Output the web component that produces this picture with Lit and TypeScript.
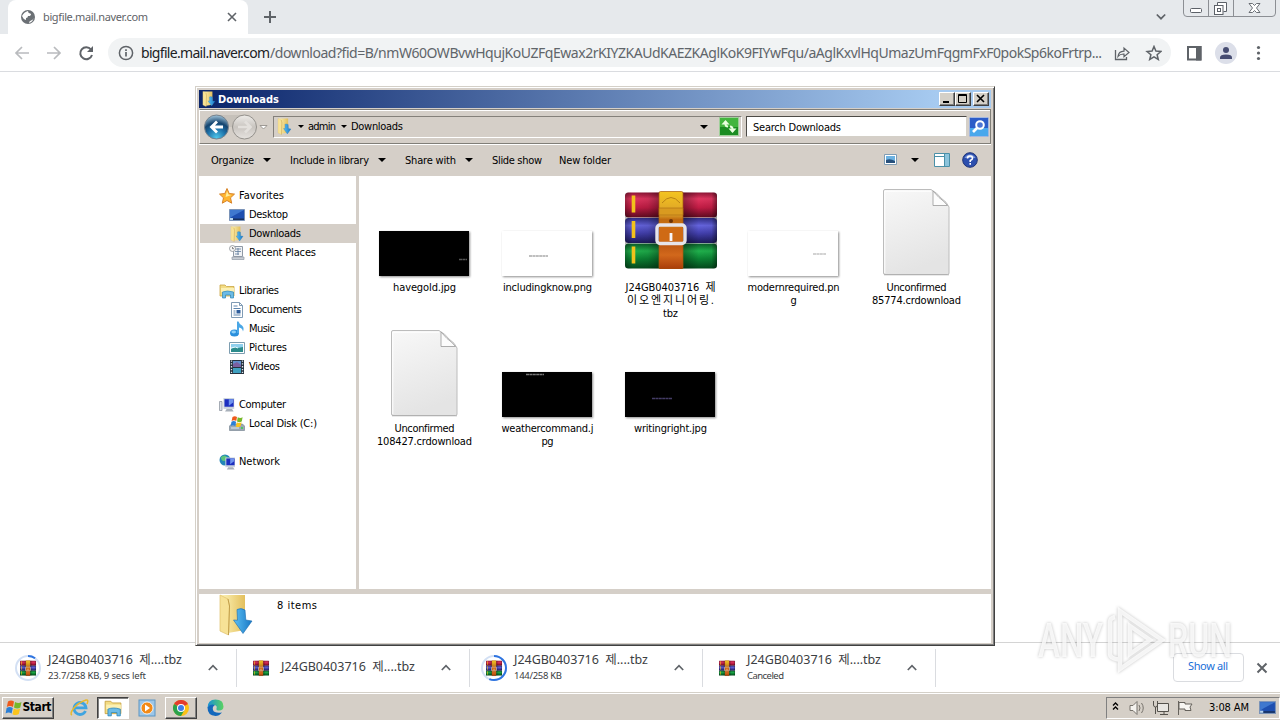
import { LitElement, html, css, svg, nothing } from 'lit';
import type { TemplateResult } from 'lit';
import { customElement, property } from 'lit/decorators.js';
import { classMap } from 'lit/directives/class-map.js';

interface NavItem {
  text: string;
  width: number;
  icon: string;
  child?: boolean;
  selected?: boolean;
  gap?: boolean;
}

interface FileItem {
  icon: string;
  lines: [string, number][];
}

interface Download {
  name: string;
  status?: string;
  statusWidth?: number;
  progress?: number;
}

// Text tracked so that it fills the given width exactly.
@customElement('fit-label')
export class FitLabel extends LitElement {
  @property() text = '';
  @property({ type: Number }) width = 0;

  static styles = css`
    :host {
      display: inline-block;
      flex: none;
      white-space: pre;
      text-align: left;
    }
  `;

  updated() {
    this.style.width = `${this.width}px`;
    this.fit();
    document.fonts.ready.then(() => this.fit());
  }

  fit() {
    const span = this.shadowRoot!.querySelector('span')!;
    span.style.letterSpacing = '0px';
    const natural = span.getBoundingClientRect().width;
    const gaps = this.text.length - 1;
    if (gaps > 0) {
      span.style.letterSpacing = `${(this.width - natural) / gaps}px`;
    }
  }

  render() {
    return html`<span>${this.text}</span>`;
  }
}

const label = (text: string, width: number, cls = '') =>
  html`<fit-label class=${cls} .text=${text} .width=${width}></fit-label>`;

const icon = (w: number, h: number, box: string, body: TemplateResult | unknown) =>
  html`<svg width=${w} height=${h} viewBox=${box} fill="none">${body}</svg>`;

const folderShape = svg`
  <defs>
    <linearGradient id="fold" x1="0" x2="1"><stop offset="0" stop-color="#fdf3b8"/><stop offset="1" stop-color="#e3bf5c"/></linearGradient>
    <linearGradient id="arr" x1="0" x2="1"><stop offset="0" stop-color="#5cc0f5"/><stop offset="1" stop-color="#1877c4"/></linearGradient>
  </defs>
  <path d="M3 1h24v35l-17 3L3 36z" fill="url(#fold)"/>
  <path d="M2 1l8 4 1.500 7-1 29L2 37z" fill="#f7e296" stroke="#e0c06a" stroke-width=".7"/>
  <path d="M10 5l1.500 7-1 29" stroke="#b8923c" stroke-width=".8"/>
  <path d="M19 15.500q4-2 8 .5l.8 10 6.200 1-9 12.500L15.500 26l4 .2z" fill="url(#arr)" stroke="#1769ae" stroke-width=".6"/>`;

const rarShape = svg`
  <defs>
    <linearGradient id="rr" x2="0" y2="1"><stop offset="0" stop-color="#8e1535"/><stop offset=".25" stop-color="#e0355f"/><stop offset=".6" stop-color="#c01c44"/><stop offset="1" stop-color="#5e0a20"/></linearGradient>
    <linearGradient id="rb" x2="0" y2="1"><stop offset="0" stop-color="#2e2c82"/><stop offset=".3" stop-color="#6463dc"/><stop offset=".6" stop-color="#4340ae"/><stop offset="1" stop-color="#1c1958"/></linearGradient>
    <linearGradient id="rg" x2="0" y2="1"><stop offset="0" stop-color="#0a5a28"/><stop offset=".3" stop-color="#20b04c"/><stop offset=".6" stop-color="#0c8434"/><stop offset="1" stop-color="#04491c"/></linearGradient>
    <linearGradient id="bt" x2="0" y2="1"><stop offset="0" stop-color="#f4c420"/><stop offset=".3" stop-color="#dba028"/><stop offset=".36" stop-color="#c06a10"/><stop offset=".62" stop-color="#e07c18"/><stop offset=".66" stop-color="#b85410"/><stop offset=".82" stop-color="#d2681c"/><stop offset="1" stop-color="#a83c08"/></linearGradient>
    <linearGradient id="sh"><stop offset="0" stop-color="#000" stop-opacity=".3"/><stop offset=".08" stop-color="#000" stop-opacity="0"/><stop offset=".25" stop-color="#000" stop-opacity=".08"/><stop offset=".36" stop-color="#000" stop-opacity=".3"/><stop offset=".65" stop-color="#000" stop-opacity=".3"/><stop offset=".8" stop-color="#000" stop-opacity="0"/><stop offset=".94" stop-color="#000" stop-opacity=".05"/><stop offset="1" stop-color="#000" stop-opacity=".45"/></linearGradient>
  </defs>
  <rect x="0" y="1.500" width="92" height="25" rx="3.500" fill="url(#rr)"/>
  <rect x="0" y="27" width="92" height="25" rx="3.500" fill="url(#rb)"/>
  <rect x="0" y="52.500" width="92" height="25" rx="3.500" fill="url(#rg)"/>
  <rect x="0" y="1.500" width="92" height="76" rx="3" fill="url(#sh)"/>
  <path d="M8.500 4.500v17M8.500 30v17M8.500 55.500v17" stroke="#f2c21c" stroke-width="3.600"/>
  <rect x="34" y=".5" width="24" height="77.500" rx="1.500" fill="url(#bt)" stroke="#a45a0c" stroke-width=".7"/>
  <path d="M34 17h24v7H34z" fill="#d99a20" stroke="#a86a10" stroke-width=".6"/>
  <path d="M37 12q9-11 18 0" stroke="#b98215"/>
  <circle cx="46" cy="30" r="2" fill="#6b3208"/>
  <rect x="32" y="34" width="28" height="18.500" rx="3" stroke="#e6e4ea" stroke-width="3.400"/>
  <path d="M34 37h24v13H34z" fill="#cf6a14"/>
  <path d="M46 42v8" stroke="#f7f5f8" stroke-width="2.800"/>`;

const docShape = svg`
  <defs><linearGradient id="pg" x2=".3" y2="1"><stop offset="0" stop-color="#f8f8f8"/><stop offset="1" stop-color="#e4e4e4"/></linearGradient></defs>
  <path d="M.5 2q0-1.500 1.500-1.500h46q6 3 10 8.500 6 4 8 9v66q0 1.500-1.500 1.500H2Q.5 85.500.5 84z" fill="url(#pg)" stroke="#bcbcbc"/>
  <path d="M2 2.200h46M1.800 2v82" stroke="#fff"/>
  <path d="M1 85.800h65" stroke="#a9a9a9" stroke-width=".8"/>
  <path d="M50 2v14.500h14.500Q61 12 56 8.500z" fill="#fcfcfc" stroke="#999" stroke-width=".8"/>`;

const monitor = svg`
  <path d="M5 1h10v10H5z" fill="#c9d2dc"/><path d="M6 2h8.500v7H6z" fill="#1c2fc0"/>
  <path d="M10 2h4v3l-4 3z" fill="#6f94ee"/><path d="M8 11h5l1.500 2.500h-8z" fill="#a8b0ba"/>`;

const libShape = svg`
  <path d="M1 2h5l1.500 1.500H15V13H1z" fill="#f3dc84" stroke="#c9a443" stroke-width=".8"/>
  <path d="M2 5h13v4H2z" fill="#fbf0b4"/>
  <path d="M3.500 15V9q4.500-2 11 0v6h-3v-3H6.500v3z" fill="#6cbbe6" stroke="#2b86ba" stroke-width=".7"/>`;

const winFlag = svg`
  <path d="M2 2.500q3-2 6 0L7 8Q4 6 .8 8z" fill="#ee5a1c"/><path d="M9 3q3.500 2 6.500 0L14.300 8.500q-3 2-6.300 0z" fill="#76b82a"/>
  <path d="M.6 9q3-2 6.200 0L5.600 14.500q-3-2-6 0z" fill="#2b7fd6"/><path d="M7.800 9.500q3 2 6.300 0L12.800 15q-3 2-6.300.2z" fill="#fbc41c"/>`;

const desktopShape = svg`
  <path d="M.5 2.500h15v11H.5z" fill="#1e4fb0" stroke="#7a93b8"/><path d="M1 3h14L4 9 1 11z" fill="#3f78cf"/>
  <path d="M1 11.500h14V13H1z" fill="#17305e"/><path d="M1 11h3v2H1z" fill="#b7d6ef"/>`;

const small: Record<string, unknown> = {
  star: svg`<path d="M8 .5l2.200 5 5.300.6-4 3.700 1.200 5.400L8 12.500l-4.700 2.700 1.200-5.400-4-3.700 5.300-.6z" fill="#ffb52e" stroke="#d7832a"/><path d="M8 3l1.500 3.500 3 .5-6 2z" fill="#ffee9c"/>`,
  desktop: desktopShape,
  recent: svg`<path d="M4.500 1.500h9v10h-9z" fill="#f0f2f5" stroke="#8f99a5"/><path d="M6 4h6M6 6.500h6M6 9h4M9 3v7" stroke="#5f7c9d" stroke-width=".8"/><path d="M3 12h12v2.500H3z" fill="#c8cdd4" stroke="#8f99a5" stroke-width=".7"/><circle cx="3.500" cy="3.500" r="3" fill="#f6f6f6" stroke="#8a8f96" stroke-width=".8"/><path d="M3.500 2v1.700h1.500" stroke="#555" stroke-width=".7"/>`,
  libraries: libShape,
  documents: svg`<path d="M2.500.5h8l3 3v12h-11z" fill="#fff" stroke="#7f9bb5"/><path d="M10.500.5v3h3" stroke="#7f9bb5"/><path d="M4.500 4h4M4.500 6.500h7M4.500 13h7M4.500 9h2M4.500 11h2" stroke="#5d84ad"/><path d="M7.500 8h4v3.500h-4z" fill="#2d5c9b"/>`,
  music: svg`<ellipse cx="5.500" cy="12" rx="4.500" ry="3.500" fill="#2a8fdc"/><ellipse cx="4.700" cy="11" rx="2.300" ry="1.400" fill="#8dd0f8"/><path d="M8 12V.5h1.500q1 3 3.500 4 2.500 2 1 6-.5-3.500-4-4V12z" fill="#4aa7e6"/>`,
  pictures: svg`<path d="M.5 2.500h15v11H.5z" fill="#fff" stroke="#7d9db0"/><path d="M2 4h12v8H2z" fill="#8fd0ee"/><path d="M2 9q4-3 7-1l5-1v5H2z" fill="#2c8c8c"/><path d="M2 8q5-2 7 0" stroke="#e9fbff"/>`,
  videos: svg`<path d="M1 1h14v14H1z" fill="#26323f"/><path d="M4 2h8v6H4z" fill="#5f8fce"/><path d="M4 9h8v5H4z" fill="#3fa0c0"/><path d="M4 5l4-2 4 3v2H4z" fill="#7b5fa0"/><path d="M2.500 1.500v13M13.500 1.500v13" stroke="#dfe6ec" stroke-width="1.300" stroke-dasharray="1.300 1.500"/>`,
  computer: svg`<g transform="translate(-1 0) scale(1.08)">${monitor}</g><path d="M.5 4.500h2.500v9H.5z" fill="#dde2e8" stroke="#848d98" stroke-width=".7"/>`,
  disk: svg`<path d="M.5 10l2-2h11l2 2v4.500H.5z" fill="#9aa7b4" stroke="#6f7c89" stroke-width=".6"/><path d="M2 12h8" stroke="#dfe8ef"/><path d="M12 12h2" stroke="#35d04a" stroke-width="1.500"/><g transform="translate(2 -1) scale(.75)">${winFlag}</g>`,
  network: svg`<circle cx="6" cy="6" r="5.500" fill="#2386b8"/><path d="M2 3q4-3 6 0t-3 4q-3 0-3-4M8 8l3-3v4z" fill="#5cc47c"/><g transform="translate(1.500 2.500) scale(.97)">${monitor}</g>`,
};

const GLOBE = svg`<circle cx="8" cy="8" r="7" fill="#6b7075"/><path d="M2 7q2-4 6-5 0 2 2 2.500t0 2.500H8q0 2-2 2v2Q3 10 2 7M9 14q0-2 2-2.500t2.500-2.500Q13 13 9 14" fill="#fff"/>`;

const CHROME = svg`<circle cx="8" cy="8" r="8" fill="#fbc116"/><path d="M8 8L1.070 4A8 8 0 0 1 14.930 4z" fill="#e33b2e"/><path d="M8 8L1.070 4A8 8 0 0 0 8 16l3.500-6z" fill="#2ba24c"/><circle cx="8" cy="8" r="4" fill="#fff"/><circle cx="8" cy="8" r="3" fill="#3f7de8"/>`;

const navItems: NavItem[] = [
  { text: 'Favorites', width: 45, icon: 'star' },
  { text: 'Desktop', width: 39, icon: 'desktop', child: true },
  { text: 'Downloads', width: 52, icon: 'downloads', child: true, selected: true },
  { text: 'Recent Places', width: 67, icon: 'recent', child: true },
  { text: 'Libraries', width: 40, icon: 'libraries', gap: true },
  { text: 'Documents', width: 53, icon: 'documents', child: true },
  { text: 'Music', width: 26, icon: 'music', child: true },
  { text: 'Pictures', width: 38, icon: 'pictures', child: true },
  { text: 'Videos', width: 31, icon: 'videos', child: true },
  { text: 'Computer', width: 47, icon: 'computer', gap: true },
  { text: 'Local Disk (C:)', width: 68, icon: 'disk', child: true },
  { text: 'Network', width: 41, icon: 'network', gap: true },
];

const files: FileItem[] = [
  { icon: 'havegold', lines: [['havegold.jpg', 63]] },
  { icon: 'including', lines: [['includingknow.png', 89]] },
  { icon: 'rar', lines: [['J24GB0403716  제', 90], ['이오엔지니어링.', 87], ['tbz', 15]] },
  { icon: 'modern', lines: [['modernrequired.pn', 92], ['g', 6]] },
  { icon: 'doc', lines: [['Unconfirmed', 60], ['85774.crdownload', 89]] },
  { icon: 'doc', lines: [['Unconfirmed', 60], ['108427.crdownload', 95]] },
  { icon: 'weather', lines: [['weathercommand.j', 92], ['pg', 12]] },
  { icon: 'writing', lines: [['writingright.jpg', 73]] },
];

const downloads: Download[] = [
  { name: 'J24GB0403716  제....tbz', status: '23.7/258 KB, 9 secs left', statusWidth: 98, progress: 0.1 },
  { name: 'J24GB0403716  제....tbz' },
  { name: 'J24GB0403716  제....tbz', status: '144/258 KB', statusWidth: 48, progress: 0.56 },
  { name: 'J24GB0403716  제....tbz', status: 'Canceled', statusWidth: 37 },
];

const caret = html`<i class="caret"></i>`;
const miniFolder = (w = 16) => icon(w, w, '1 0 34 42', folderShape);

@customElement('explorer-window')
export class ExplorerWindow extends LitElement {
  static styles = css`
    :host {
      display: flex;
      flex-direction: column;
      box-sizing: border-box;
      width: 800px;
      height: 560px;
      padding: 2px 1px 1px 2px;
      background: #d5cfc8;
      border: 1px solid #d4d0c8;
      border-right-color: #404040;
      border-bottom-color: #404040;
      box-shadow: inset 1px 1px #fff, inset -1px -1px #808080;
      font: 11px/13px 'DejaVu Sans Condensed', 'Noto Sans CJK KR', sans-serif;
      color: #000;
    }
    svg { display: block; flex: none; }
    .title {
      display: flex;
      align-items: center;
      height: 18px;
      margin: 1px 2px 0 1px;
      padding: 0 2px 0 2px;
      background: linear-gradient(90deg, #0a246a, #a6caf0 93%);
      color: #fff;
      font-weight: bold;
    }
    .title fit-label { margin-left: 1px; }
    .grow { flex: 1; }
    .btn {
      box-sizing: border-box;
      width: 16px;
      height: 14px;
      border: 1px solid;
      border-color: #fff #404040 #404040 #fff;
      background: #d4d0c8;
      box-shadow: inset -1px -1px #808080;
    }
    .btn.close { margin-left: 2px; }
    .rebar {
      display: flex;
      align-items: center;
      box-sizing: border-box;
      height: 35px;
      margin: 1px 2px 0 1px;
      padding: 0 1px 0 4px;
      border: 1px solid #807e78;
      border-left-color: #fff;
      box-shadow: inset 0 1px #fff, 0 1px #fff;
    }
    .caret {
      width: 0;
      border: 4px solid transparent;
      border-top-color: #000;
      border-bottom: 0;
    }
    .caret.s { border-width: 3px 3px 0; }
    .address {
      display: flex;
      align-items: center;
      box-sizing: border-box;
      width: 469px;
      height: 22px;
      margin-left: 5px;
      padding: 0 2px;
      border: 1px solid #84807a;
      border-bottom-color: #fff;
      border-right-color: #fff;
    }
    .address .s { margin: 0 4px 0 5px; }
    .address .caret:not(.s) { margin-right: 11px; }
    .search {
      box-sizing: border-box;
      width: 221px;
      height: 21px;
      margin: 0 2px 0 4px;
      padding: 4px 6px 2px;
      background: #fff;
      border: 1px solid #d4d0c8;
      border-color: #4c4a46 #d4d0c8 #d4d0c8 #4c4a46;
    }
    .commands {
      display: flex;
      align-items: center;
      height: 32px;
      padding: 0 14px 0 13px;
    }
    .commands .caret { margin: 0 19px 0 9px; }
    .commands .next { margin-left: 17px; }
    .body { display: flex; flex: none; height: 413px; margin: 0 2px 0 1px; }
    .nav {
      box-sizing: border-box;
      width: 157px;
      padding: 10px 0 0 1px;
      background: #fff;
    }
    .item {
      display: flex;
      align-items: center;
      gap: 4px;
      height: 19px;
      padding-left: 19px;
    }
    .item.child { padding-left: 29px; }
    .item.gap { margin-top: 19px; }
    .item.selected { background: #d5cfc8; }
    .files {
      display: grid;
      grid-template-columns: repeat(5, 123px);
      grid-auto-rows: 141px;
      width: 632px;
      box-sizing: border-box;
      margin-left: 3px;
      padding-left: 4px;
      background: #fff;
    }
    .file {
      display: flex;
      flex-direction: column;
      align-items: center;
    }
    .pic {
      display: flex;
      flex: none;
      align-items: flex-end;
      justify-content: center;
      height: 100px;
      margin: 0 1px 5px 0;
    }
    .pic.rar { height: 93px; margin: 0 0 12px; }
    .pic.doc { margin-right: 0; }
    .thumb { filter: drop-shadow(1px 1px 1px rgba(0, 0, 0, 0.45)); }
    .details {
      display: flex;
      flex: none;
      height: 49px;
      margin: 5px 2px 0 1px;
      padding-left: 18px;
      background: #fff;
    }
    .details fit-label { margin: 5px 0 0 22px; }
  `;

  renderPic(kind: string) {
    if (kind === 'rar') return icon(92, 78, '0 0 92 78', rarShape);
    if (kind === 'doc') return icon(67, 87, '0 0 67 87', docShape);
    const white = kind === 'including' || kind === 'modern';
    // faint caption strokes inside each preview: x, y, length, colour
    const marks: Record<string, [number, number, number, string]> = {
      havegold: [80, 28.5, 8, '#555'],
      including: [27, 25, 19, '#aaa'],
      modern: [65, 23, 13, '#c4c4c4'],
      weather: [24, 2.5, 18, '#777'],
      writing: [27, 26.5, 20, '#443c66'],
    };
    const [x, y, len, color] = marks[kind];
    return html`<svg class="thumb" width="90" height="45" viewBox="0 0 90 45">
      <rect width="90" height="45" fill=${white ? '#fff' : '#000'}></rect>
      <path d="M${x} ${y}h${len}" stroke=${color} stroke-width="1.3" stroke-dasharray="3 .4"></path>
    </svg>`;
  }

  renderNav(item: NavItem) {
    const classes = { item: true, child: !!item.child, selected: !!item.selected, gap: !!item.gap };
    return html`<div class=${classMap(classes)}>
      ${item.icon === 'downloads' ? miniFolder() : icon(16, 16, '0 0 16 16', small[item.icon])}
      ${label(item.text, item.width)}
    </div>`;
  }

  render() {
    return html`
      <div class="title">
        ${miniFolder()}${label('Downloads', 61)}
        <span class="grow"></span>
        <span class="btn">${icon(14, 12, '0 0 14 12', svg`<path d="M3 9h6" stroke="#000" stroke-width="2"/>`)}</span>
        <span class="btn">${icon(14, 12, '0 0 14 12', svg`<path d="M2.500 1.500h8v8h-8zM2 2.500h9" stroke="#000"/>`)}</span>
        <span class="btn close">${icon(14, 12, '0 0 14 12', svg`<path d="M3 2l7 7M10 2l-7 7" stroke="#000" stroke-width="1.600"/>`)}</span>
      </div>
      <div class="rebar">
        ${icon(64, 28, '0 0 64 28', svg`
          <defs>
            <radialGradient id="bk" cx=".5" cy=".95" r=".9"><stop offset="0" stop-color="#4fc8ec"/><stop offset=".45" stop-color="#1c6ea6"/><stop offset=".7" stop-color="#16456f"/><stop offset="1" stop-color="#8fb4cc"/></radialGradient>
            <linearGradient id="fw" x2="0" y2="1"><stop offset="0" stop-color="#eeece9"/><stop offset=".5" stop-color="#c9c5c0"/><stop offset="1" stop-color="#e6e3df"/></linearGradient>
          </defs>
          <path d="M13 2h29v12H13z" fill="#c6c1ba"/>
          <circle cx="12.500" cy="14" r="12" fill="url(#bk)" stroke="#77828c"/>
          <path d="M19 14H8M13 8.500L7.500 14l5.500 5.500" stroke="#fff" stroke-width="2.800"/>
          <circle cx="40.500" cy="14" r="12" fill="url(#fw)" stroke="#94918c"/>
          <path d="M34 14h12M41 8.500l5.500 5.500-5.500 5.500" stroke="#e3e0dc" stroke-width="2.600"/>
          <path d="M56 12.500h7L59.500 16z" fill="#fff" stroke="#8a8680" stroke-width=".8"/>`)}
        <div class="address">
          ${miniFolder(17)}<i class="caret s"></i>
          ${label('admin', 28)}<i class="caret s"></i>${label('Downloads', 52)}
          <span class="grow"></span>${caret}
          ${icon(20, 19, '0 0 20 19', svg`
            <rect x=".5" y=".5" width="19" height="18" fill="#43b53e" stroke="#9fcf9a"/><path d="M1 10h18v8H1z" fill="#1c8c22"/>
            <path d="M6.500 4.500v2.500q0 2.500 2.500 2.500" stroke="#eaffdf" stroke-width="2"/><path d="M2.500 7.500l4-4.500 4 4.500z" fill="#eaffdf"/>
            <path d="M13.500 14.500V12q0-2.500-2.500-2.500" stroke="#eaffdf" stroke-width="2"/><path d="M9.500 11.500l4 4.500 4-4.500z" fill="#eaffdf"/>`)}
        </div>
        <div class="search">${label('Search Downloads', 88)}</div>
        ${icon(20, 20, '0 0 20 20', svg`
          <rect x=".5" y=".5" width="19" height="19" rx="1" fill="#2c5cc8" stroke="#a3b8e0"/><path d="M1 11h18v8H1z" fill="#4aa8ec"/>
          <circle cx="11" cy="8" r="3.800" fill="#4b74d4" stroke="#fff" stroke-width="2"/><path d="M8 11l-4 4" stroke="#fff" stroke-width="2.600"/>`)}
      </div>
      <div class="commands">
        ${label('Organize', 43)}${caret}${label('Include in library', 79)}${caret}${label('Share with', 51)}${caret}
        ${label('Slide show', 50)}${label('New folder', 52, 'next')}
        <span class="grow"></span>
        ${icon(96, 18, '0 0 96 18', svg`
          <path d="M1.500 3.500h12v10h-12z" fill="#fff" stroke="#7e9db5"/><path d="M3 5h9v7H3z" fill="#6cb2e2"/><path d="M3 9q4-2 9 1v2H3z" fill="#27507c"/>
          <path d="M28 7h8l-4 4z" fill="#000"/>
          <path d="M51.500 2.500h15v13h-15z" fill="#fff" stroke="#4a90a8"/><path d="M61.500 3v12.500M52 5.500h9" stroke="#4a90a8"/><path d="M62 3h4v12h-4z" fill="#8cc4dc"/>
          <circle cx="87" cy="9" r="7.300" fill="#2c4fae" stroke="#1f3478"/><path d="M81.500 7a6 6 0 0 1 11 0z" fill="#7c98dc"/>
          <path d="M84.500 7.500q0-2.500 2.500-2.500t2.500 2.200q0 1.300-2.300 2.300v1.500M87.200 12v1.700" stroke="#fff" stroke-width="1.600"/>`)}
      </div>
      <div class="body">
        <div class="nav">${navItems.map((item) => this.renderNav(item))}</div>
        <div class="files">
          ${files.map(
            (file) => html`
              <div class="file">
                <div class="pic ${file.icon}">${this.renderPic(file.icon)}</div>
                ${file.lines.map(([text, width]) => label(text, width))}
              </div>
            `
          )}
        </div>
      </div>
      <div class="details">
        ${icon(38, 42, '0 0 36 42', folderShape)}
        ${label('8 items', 40)}
      </div>
    `;
  }
}

@customElement('app-root')
export class AppRoot extends LitElement {
  static styles = css`
    :host {
      display: flex;
      flex-direction: column;
      position: relative;
      width: 1280px;
      height: 720px;
      overflow: hidden;
      background: #fff;
      color: #3c4043;
      font: 11px/13px 'Noto Sans', 'Noto Sans CJK KR', sans-serif;
    }
    svg { display: block; flex: none; }
    .grow { flex: 1; }
    .tabs {
      display: flex;
      height: 34px;
      background: #e6e9ec;
    }
    .tab {
      display: flex;
      align-items: center;
      box-sizing: border-box;
      width: 240px;
      height: 34px;
      margin-left: 8px;
      padding: 0 10px 0 12px;
      background: #fff;
      border-radius: 8px 8px 0 0;
      color: #5f6368;
    }
    .tab fit-label { margin: -2px 0 0 7px; }
    .newtab { margin: 10px 0 0 15px; }
    .chev { margin: 13px 17px 0 0; }
    .winbtns { margin-right: 4px; }
    .toolbar {
      display: flex;
      align-items: center;
      height: 37px;
      padding: 0 0 0 14px;
      border-bottom: 1px solid #dadce0;
    }
    .omnibox {
      display: flex;
      align-items: center;
      box-sizing: border-box;
      width: 1063px;
      height: 29px;
      margin-left: 13px;
      padding: 0 9px 0 10px;
      border-radius: 15px;
      background: #f1f3f4;
      font-size: 14px;
      line-height: 20px;
      color: #60656a;
    }
    .omnibox .host { margin-left: 7px; color: #202124; }
    .page { flex: 1; }
    .shelf {
      display: flex;
      align-items: center;
      box-sizing: border-box;
      height: 50px;
      border-top: 1px solid #d4d4d4;
    }
    .download {
      display: flex;
      align-items: center;
      box-sizing: border-box;
      width: 233px;
      height: 38px;
      padding: 0 18px 0 15px;
      border-right: 1px solid #dadce0;
    }
    .download:first-child { width: 237px; }
    .download:not(:first-child) { padding-left: 11px; }
    .words {
      display: flex;
      flex-direction: column;
      flex: 1;
      margin: -2px 0 0 7px;
    }
    .name { font-size: 12.5px; line-height: 18px; }
    .status { font-size: 9.5px; line-height: 14px; }
    .all {
      box-sizing: border-box;
      width: 71px;
      height: 29px;
      padding: 5px 14px;
      border: 1px solid #dadce0;
      border-radius: 4px;
      color: #1a6fd8;
    }
    .shut { margin: 0 12px; }
    .taskbar {
      display: flex;
      align-items: center;
      box-sizing: border-box;
      height: 28px;
      padding: 2px 0 0 2px;
      background: #d5cfc7;
      border-top: 1px solid #d4d0c8;
      box-shadow: inset 0 1px #fff;
      font-family: 'DejaVu Sans Condensed', sans-serif;
      color: #000;
    }
    .start, .task {
      display: flex;
      align-items: center;
      justify-content: center;
      box-sizing: border-box;
      width: 32px;
      height: 22px;
      border: 1px solid;
      border-color: #fff #404040 #404040 #fff;
      box-shadow: inset -1px -1px #808080;
    }
    .start { width: 52px; gap: 1px; font-weight: bold; font-size: 12px; }
    .task.pressed {
      border-color: #404040 #fff #fff #404040;
      background: #fff;
      box-shadow: inset 1px 1px #808080;
    }
    .task.plain { margin-left: 2px; border-color: transparent; box-shadow: none; }
    .tray {
      display: flex;
      align-items: center;
      gap: 10px;
      box-sizing: border-box;
      width: 174px;
      height: 22px;
      padding: 0 2px 0 5px;
      border: 1px solid;
      border-color: #808080 #fff #fff #808080;
    }
    explorer-window {
      position: absolute;
      left: 195px;
      top: 86px;
    }
    .watermark {
      position: absolute;
      left: 1034px;
      top: 604px;
      filter: drop-shadow(0 0 1.5px rgba(0, 0, 0, 0.3));
    }
  `;

  renderDownload(item: Download) {
    const ring = 2 * Math.PI * 12;
    return html`
      <div class="download">
        ${icon(26, 26, '0 0 26 26', svg`
          ${item.progress
            ? svg`<circle cx="13" cy="13" r="12" stroke="#d3e0f4" stroke-width="2"/>
              <circle cx="13" cy="13" r="12" stroke="#2e74e0" stroke-width="2" transform="rotate(-90 13 13)"
                stroke-dasharray="${ring * item.progress} ${ring}"/>`
            : nothing}
          <g transform="translate(5 5.500) scale(.174 .195)">${rarShape}</g>`)}
        <div class="words">
          ${label(item.name, 134, 'name')}
          ${item.status ? label(item.status, item.statusWidth!, 'status') : nothing}
        </div>
        ${icon(10, 7, '0 0 10 7', svg`<path d="M.8 6L5 1.700 9.200 6" stroke="#5f6368" stroke-width="1.700"/>`)}
      </div>
    `;
  }

  render() {
    return html`
      <div class="tabs">
        <div class="tab">
          ${icon(16, 16, '0 0 16 16', GLOBE)}
          ${label('bigfile.mail.naver.com', 105)}
          <span class="grow"></span>
          ${icon(12, 12, '0 0 12 12', svg`<path d="M2 2l8 8M10 2l-8 8" stroke="#5f6368" stroke-width="1.600"/>`)}
        </div>
        <div class="newtab">${icon(14, 14, '0 0 14 14', svg`<path d="M7 1v12M1 7h12" stroke="#5f6368" stroke-width="2"/>`)}</div>
        <span class="grow"></span>
        <div class="chev">${icon(10, 8, '0 0 10 8', svg`<path d="M.8 1.500L5 5.700l4.200-4.200" stroke="#5f6368" stroke-width="1.700"/>`)}</div>
        <div class="winbtns">${icon(93, 18, '0 0 93 18', svg`
          <path d="M.5 0v13q0 3.500 3.500 3.500h85q3.500 0 3.500-3.500V0M25.500 0v16M50.500 0v16" stroke="#8c8f94"/>
          <rect x="7.500" y="8.500" width="11" height="4" rx="1" fill="#fff" stroke="#5c6168"/>
          <path d="M34.500 5.500v-3h9v9h-3" fill="#fff" stroke="#5c6168"/><rect x="31.500" y="5.500" width="8.500" height="9" fill="#fff" stroke="#5c6168"/><rect x="34.500" y="8.500" width="3" height="3" stroke="#5c6168"/>
          <path d="M66 3.500h3.500l2 2 2-2H77l-3.500 4.500 3.500 4.500h-3.500l-2-2-2 2H66L69.500 8z" fill="#fff" stroke="#5c6168" stroke-width=".9"/>`)}</div>
      </div>
      <div class="toolbar">
        ${icon(81, 18, '0 0 81 18', svg`
          <path d="M15 9H2M8 3L2 9l6 6M33 9h13M40 3l6 6-6 6" stroke="#b9bbbe" stroke-width="1.700"/>
          <path d="M77 5.500A6 6 0 1 0 78 11" stroke="#5f6368" stroke-width="2"/><path d="M79 2v6h-6z" fill="#5f6368"/>`)}
        <div class="omnibox">
          ${icon(16, 16, '0 0 16 16', svg`<circle cx="8" cy="8" r="6.600" stroke="#5f6368" stroke-width="1.500"/><path d="M8 7v4.500M8 4.300v1.600" stroke="#5f6368" stroke-width="1.700"/>`)}
          ${label('bigfile.mail.naver.com', 129, 'host')}${label(
            '/download?fid=B/nmW60OWBvwHqujKoUZFqEwax2rKIYZKAUdKAEZKAglKoK9FIYwFqu/aAglKxvlHqUmazUmFqgmFxF0pokSp6koFrtrp...',
            832
          )}
          <span class="grow"></span>
          ${icon(48, 16, '0 0 48 16', svg`
            <path d="M1.500 5v9.500h11V12" stroke="#5f6368" stroke-width="1.300"/><path d="M4 11.500q.5-5 6-5.300V3l5 4.500-5 4.300V9q-4-.2-6 2.500z" stroke="#5f6368" stroke-width="1.200"/>
            <path d="M40 1.500l1.900 4.600 5 .4-3.800 3.200 1.200 4.800L40 11.900l-4.300 2.600 1.200-4.800-3.800-3.200 5-.4z" stroke="#5f6368" stroke-width="1.500"/>`)}
        </div>
        ${icon(92, 24, '0 0 92 24', svg`
          <path d="M17 6h12.500v12.500H17z" stroke="#5f6368" stroke-width="2"/><path d="M25 5h5.500v14.500H25z" fill="#5f6368"/>
          <circle cx="55" cy="12" r="11" fill="#dcdfe9"/><circle cx="55" cy="9" r="3" fill="#474d72"/><path d="M49 18v-1.500q0-3 6-3t6 3V18z" fill="#474d72"/>
          <circle cx="87.500" cy="6.500" r="1.600" fill="#5f6368"/><circle cx="87.500" cy="12" r="1.600" fill="#5f6368"/><circle cx="87.500" cy="17.500" r="1.600" fill="#5f6368"/>`)}
      </div>
      <div class="page"></div>
      <div class="shelf">
        ${downloads.map((item) => this.renderDownload(item))}
        <span class="grow"></span>
        <div class="all">${label('Show all', 40)}</div>
        <div class="shut">${icon(12, 12, '0 0 12 12', svg`<path d="M1.500 1.500l9 9M10.500 1.500l-9 9" stroke="#5f6368" stroke-width="2"/>`)}</div>
      </div>
      <div class="taskbar">
        <div class="start">${icon(17, 17, '-1 0 17 17', winFlag)}${label('Start', 29)}</div>
        ${icon(43, 20, '0 0 43 20', svg`
          <path d="M31.500 13A6 6 0 1 1 32 9.800H20.500" stroke="#3fa4e0" stroke-width="2.800"/>
          <path d="M18 17q-2.500-1 1.500-6.500T32 2q3-.5 1 4" stroke="#e8b92c" stroke-width="1.500"/>`)}
        <div class="task pressed">${icon(18, 18, '0 0 16 16', libShape)}</div>
        ${icon(36, 18, '0 0 36 18', svg`
          <rect x="10" y="1" width="16" height="16" fill="#9cc6e8" stroke="#5d96c4"/><circle cx="18" cy="9" r="6" fill="#f28a18" stroke="#fff" stroke-width=".8"/><path d="M16 5.500l5 3.500-5 3.500z" fill="#fff"/>`)}
        <div class="task">${icon(16, 16, '0 0 16 16', CHROME)}</div>
        <div class="task plain">${icon(17, 17, '0 0 17 17', svg`
          <defs><linearGradient id="ed"><stop offset="0" stop-color="#168fd8"/><stop offset="1" stop-color="#5bd360"/></linearGradient></defs>
          <path d="M.5 9Q.5.500 8.500.500t8 7q0 4-4.500 4-3 0-2.500-2 1-3-2-3.500Q3 5.500.5 9z" fill="url(#ed)"/>
          <path d="M.5 8.500Q3 4.500 8 6q-3 1.500-2 5t9 2.500Q12 17 8.500 17 .5 16.500.5 8.500z" fill="#1468bc"/>`)}</div>
        <span class="grow"></span>
        <div class="tray">
          ${icon(87, 18, '0 0 87 18', svg`
            <path d="M1 6.500L3.500 4 6 6.500M1 10.500L3.500 8 6 10.500" stroke="#000" stroke-width="1.300"/>
            <path d="M18 6.500h3l4-4v13l-4-4h-3z" fill="#f4f2ee" stroke="#77736c"/><path d="M27 6q2 3 0 6M29.500 4q3.500 5 0 10" stroke="#77736c"/>
            <path d="M45.500 4.500h11v8h-11z" fill="#e8e6e2" stroke="#55524c"/><path d="M48 15.500h8M52 13v2M41.500 2v4q0 2 2 2t2-2V2M43.500 8v7" stroke="#55524c"/>
            <path d="M66.500 2v14M67 3.500h6v1.500h7l-2 3 1 3.500h-6V10h-6z" fill="#f8f6f2" stroke="#66625c"/>`)}
          ${label('3:08 AM', 40, 'clock')}
          ${icon(17, 17, '0 0 16 16', desktopShape)}
        </div>
      </div>
      <explorer-window></explorer-window>
      <svg class="watermark" width="202" height="72" viewBox="0 0 202 72" fill="none">
        <g fill="#fff" fill-opacity=".8" font-family="Roboto, sans-serif" font-weight="500" font-size="48">
          <text x="4" y="53" textLength="65" lengthAdjust="spacingAndGlyphs">ANY</text>
          <text x="134" y="53" textLength="64" lengthAdjust="spacingAndGlyphs">RUN</text>
        </g>
        <path d="M84 55.500Q76 54 76 50V18q0-4 5-5M86 7v58l42-29zM96 22v28l20-14z" stroke="#fff" stroke-opacity=".8" stroke-width="4.500"/>
      </svg>
    `;
  }
}
